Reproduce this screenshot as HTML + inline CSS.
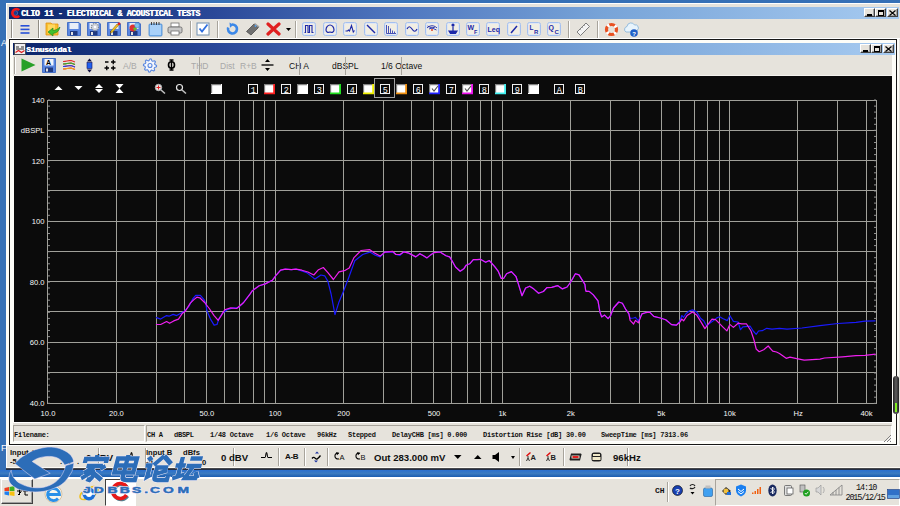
<!DOCTYPE html><html><head><meta charset="utf-8"><style>
*{margin:0;padding:0;box-sizing:border-box}
html,body{width:900px;height:506px;overflow:hidden}
body{position:relative;background:#3670b6;font-family:"Liberation Sans",sans-serif;}
.a{position:absolute}
.tb{background:linear-gradient(to right,#0a246a 0%,#2a4898 23%,#5078c0 44.5%,#78a4d8 67%,#a6caf0 100%)}
.face{background:#e6e3dc}
.wb{position:absolute;width:11px;height:9px;background:#e6e3dc;border:1px solid;border-color:#fff #404040 #404040 #fff;box-shadow:inset -1px -1px #a0a0a0}
.sep{position:absolute;width:2px;border-left:1px solid #a8a49c;border-right:1px solid #fff}
.mono{font-family:"Liberation Mono",monospace}
.st{position:absolute;top:430px;font-family:"Liberation Mono",monospace;font-size:7px;letter-spacing:-0.25px;color:#101010;font-weight:bold;white-space:pre;line-height:10px}
.ib{position:absolute;top:22px;width:14px;height:14px;border:1px solid #a4c0f0;border-radius:2.5px;background:#f1eee4;box-shadow:inset 0 0 0 1px #dfe6f4}
.ttxt{position:absolute;font-size:8.5px;color:#101010;line-height:10px;white-space:pre}
.nb{position:absolute;top:84px;width:10px;height:10px;border:1px solid #fff;color:#fff;font:bold 8px/8px "Liberation Mono",monospace;text-align:center}
.cb{position:absolute;top:84px;width:11px;height:10px;background:#fff;border-top:2px solid #808080;border-left:1px solid #a0a0a0}
</style></head><body>
<div class="a face" style="left:6px;top:3px;width:894px;height:466px;border-left:1px solid #fff;border-top:1px solid #fff"></div>
<div class="a" style="left:6px;top:39px;width:3px;height:407px;background:#fcfbf6"></div>
<div class="a tb" style="left:9px;top:7px;width:890px;height:12px"></div>
<svg class="a" style="left:10px;top:7px" width="11" height="12" viewBox="0 0 11 12"><circle cx="5.3" cy="6" r="2.4" fill="#1a3a8a" stroke="#6080c0" stroke-width="0.6"/><path d="M9.2 3.2A4 4 0 1 0 9.2 8.8" fill="none" stroke="#f01818" stroke-width="2.6"/></svg>
<div class="a mono" style="left:21px;top:7.7px;height:12px;font-size:8.2px;line-height:12px;font-weight:bold;color:#fff;letter-spacing:-0.33px;white-space:pre;text-shadow:0.5px 0 0 #fff">CLIO 11 - ELECTRICAL &amp; ACOUSTICAL TESTS</div>
<div class="wb" style="left:864px;top:8px"></div>
<div class="wb" style="left:875px;top:8px"></div>
<div class="wb" style="left:887px;top:8px"></div>
<div class="a" style="left:867px;top:14px;width:5px;height:2px;background:#000"></div>
<div class="a" style="left:878px;top:10px;width:6px;height:6px;border:1px solid #000;border-top-width:2px"></div>
<svg class="a" style="left:889px;top:10px" width="7" height="6"><path d="M0.5 0.5L6.5 5.5M6.5 0.5L0.5 5.5" stroke="#000" stroke-width="1.2"/></svg>
<div class="a" style="left:9px;top:38px;width:891px;height:1px;background:#fff"></div>
<div class="a" style="left:11px;top:20px;width:2px;height:18px;border-left:1px solid #908c84;border-right:1px solid #fff"></div>
<svg class="a" style="left:20px;top:24px" width="10" height="11" viewBox="0 0 10 11"><rect x="0.5" y="1" width="9" height="1.6" fill="#2850d8"/><rect x="0.5" y="4.6" width="9" height="1.6" fill="#2850d8"/><rect x="0.5" y="8.2" width="9" height="1.6" fill="#2850d8"/></svg>
<div class="sep" style="left:190px;top:21px;height:17px"></div>
<div class="sep" style="left:217px;top:21px;height:17px"></div>
<div class="sep" style="left:295px;top:21px;height:17px"></div>
<div class="sep" style="left:568px;top:21px;height:17px"></div>
<div class="sep" style="left:597px;top:21px;height:17px"></div>
<div class="a" style="left:38px;top:20px;width:2px;height:18px;border-left:1px solid #908c84;border-right:1px solid #fff"></div>
<svg class="a" style="left:45px;top:21px" width="16" height="16" viewBox="0 0 16 16"><path d="M1 2h5l1 1h6v11H1z" fill="#f8c030" stroke="#e09010" stroke-width="0.8"/><path d="M3 3.5h7v9H3z" fill="#ffd860"/><path d="M15 6c-1 4-3 6-7 6.5V15L3 11l5-4v2.5c3-.3 5-1.5 7-3.5z" fill="#40c030" stroke="#208010" stroke-width="0.6"/></svg>
<svg class="a" style="left:67px;top:22px" width="14" height="14" viewBox="0 0 14 14"><path d="M0.5 0.5h11.5l1.5 1.5v11.5H0.5z" fill="#5a86e0" stroke="#3060c0" stroke-width="0.8"/><rect x="2.5" y="1" width="9" height="6" fill="#e8eef8"/><rect x="3" y="9" width="7.5" height="4.5" fill="#203a80"/><rect x="4" y="10" width="2" height="3" fill="#e0e0e0"/></svg>
<svg class="a" style="left:87px;top:22px" width="14" height="14" viewBox="0 0 14 14"><path d="M0.5 0.5h11.5l1.5 1.5v11.5H0.5z" fill="#5a86e0" stroke="#3060c0" stroke-width="0.8"/><rect x="2.5" y="1" width="9" height="6" fill="#e8eef8"/><rect x="3" y="9" width="7.5" height="4.5" fill="#203a80"/><rect x="4" y="10" width="2" height="3" fill="#e0e0e0"/><circle cx="8" cy="5" r="3.6" fill="#d0d4dc" stroke="#808890" stroke-width="1.2" stroke-dasharray="1.4 1"/><circle cx="8" cy="5" r="1.3" fill="#fff"/></svg>
<svg class="a" style="left:107px;top:22px" width="14" height="14" viewBox="0 0 14 14"><path d="M0.5 0.5h11.5l1.5 1.5v11.5H0.5z" fill="#5a86e0" stroke="#3060c0" stroke-width="0.8"/><rect x="2.5" y="1" width="9" height="6" fill="#e8eef8"/><rect x="3" y="9" width="7.5" height="4.5" fill="#203a80"/><rect x="4" y="10" width="2" height="3" fill="#e0e0e0"/><path d="M4 9l6-7 1.5 1.3-6 7-2 .8z" fill="#f0c020" stroke="#806000" stroke-width="0.5"/><circle cx="12" cy="1.8" r="1.4" fill="#e02020"/></svg>
<svg class="a" style="left:127px;top:22px" width="14" height="14" viewBox="0 0 14 14"><path d="M0.5 0.5h11.5l1.5 1.5v11.5H0.5z" fill="#5a86e0" stroke="#3060c0" stroke-width="0.8"/><rect x="2.5" y="1" width="9" height="6" fill="#e8eef8"/><rect x="3" y="9" width="7.5" height="4.5" fill="#203a80"/><rect x="4" y="10" width="2" height="3" fill="#e0e0e0"/><circle cx="6" cy="6" r="3.5" fill="#e03030"/><path d="M6 6l3.5-1a3.5 3.5 0 0 1-2 4z" fill="#60c030"/><circle cx="10" cy="3.5" r="2.4" fill="#80c0f0" stroke="#4080c0" stroke-width="0.5"/></svg>
<svg class="a" style="left:148px;top:21px" width="15" height="16" viewBox="0 0 15 16"><rect x="1" y="3" width="13" height="12" rx="1" fill="#80b8f0" stroke="#4888d0" stroke-width="0.8"/><rect x="2" y="4" width="11" height="10" fill="#a8d0f8"/><g fill="#404040"><rect x="3" y="1" width="1" height="3"/><rect x="5.5" y="1" width="1" height="3"/><rect x="8" y="1" width="1" height="3"/><rect x="10.5" y="1" width="1" height="3"/></g></svg>
<svg class="a" style="left:167px;top:22px" width="16" height="14" viewBox="0 0 16 14"><rect x="4" y="1" width="8" height="4" fill="#fff" stroke="#707070" stroke-width="0.8"/><rect x="1" y="5" width="14" height="6" rx="1.5" fill="#c8c8c8" stroke="#606060" stroke-width="0.8"/><rect x="4" y="9" width="8" height="4" fill="#fff" stroke="#707070" stroke-width="0.8"/></svg>
<svg class="a" style="left:196px;top:22px" width="14" height="14" viewBox="0 0 14 14"><rect x="1" y="1" width="12" height="12" fill="#fff" stroke="#7090b0" stroke-width="1"/><path d="M3.5 6.5l2.5 3 5.5-7" fill="none" stroke="#3070e0" stroke-width="1.8"/></svg>
<svg class="a" style="left:225px;top:22px" width="14" height="14" viewBox="0 0 14 14"><path d="M3.2 5.5A4.5 4.5 0 1 0 7 2.5" fill="none" stroke="#3c88e8" stroke-width="2.6"/><path d="M4.5 0.5l4 2.2-3.5 3z" fill="#3c88e8"/></svg>
<svg class="a" style="left:245px;top:22px" width="15" height="14" viewBox="0 0 15 14"><path d="M1.5 9.5L9 2l4.5 3.5-7.5 7.5z" fill="#707070" stroke="#404040" stroke-width="0.7"/><path d="M9 2l4.5 3.5 1-1L10 1z" fill="#a0a0a0"/><circle cx="10.5" cy="4" r="0.9" fill="#50a0f0"/></svg>
<svg class="a" style="left:266px;top:22px" width="15" height="14" viewBox="0 0 15 14"><path d="M2 2L13 12M13 2L2 12" stroke="#e02020" stroke-width="3.2" stroke-linecap="round"/></svg>
<svg class="a" style="left:286px;top:28px" width="5" height="3" viewBox="0 0 5 3"><path d="M0 0h5L2.5 3z" fill="#000"/></svg>
<div class="ib" style="left:302px"></div>
<div class="ib" style="left:323px"></div>
<div class="ib" style="left:343px"></div>
<div class="ib" style="left:364px"></div>
<div class="ib" style="left:384px"></div>
<div class="ib" style="left:405px"></div>
<div class="ib" style="left:425px"></div>
<div class="ib" style="left:446px"></div>
<div class="ib" style="left:466px"></div>
<div class="ib" style="left:486px"></div>
<div class="ib" style="left:507px"></div>
<div class="ib" style="left:527px"></div>
<div class="ib" style="left:547px"></div>
<svg class="a" style="left:302px;top:22px" width="14" height="14" viewBox="0 0 14 14"><path d="M2.5 10.5h1V3.5h2.5v7h1.5V3.5h2.5v7h1.5" fill="none" stroke="#1c28a8" stroke-width="1.1"/></svg>
<svg class="a" style="left:323px;top:22px" width="14" height="14" viewBox="0 0 14 14"><path d="M3 8c0-3 2-5 4-5s4 2 4 5c0 2-2 3-4 2-2 1-4 0-4-2z" fill="none" stroke="#1c28a8" stroke-width="1.2"/></svg>
<svg class="a" style="left:343px;top:22px" width="14" height="14" viewBox="0 0 14 14"><path d="M2.5 9h2l1-1 1 1 2-5.5 1.8 6.5 1.2-1.5" fill="none" stroke="#1c28a8" stroke-width="1.1"/></svg>
<svg class="a" style="left:364px;top:22px" width="14" height="14" viewBox="0 0 14 14"><path d="M3 3l8 8" stroke="#1c28a8" stroke-width="1.4"/></svg>
<svg class="a" style="left:384px;top:22px" width="14" height="14" viewBox="0 0 14 14"><path d="M2.5 3v8.5h9.5M4.5 11V4M6.5 11V6.5M8.5 11V8.5M10.5 11V9.5" fill="none" stroke="#1c28a8" stroke-width="0.8"/></svg>
<svg class="a" style="left:405px;top:22px" width="14" height="14" viewBox="0 0 14 14"><path d="M2 7c1.5-3 3-3 5 0s3.5 3 5 0" fill="none" stroke="#1c28a8" stroke-width="1.2"/></svg>
<svg class="a" style="left:425px;top:22px" width="14" height="14" viewBox="0 0 14 14"><path d="M2 6c3-3 7-3 10 0M2.5 4l9 4M4 7l6-2" fill="none" stroke="#1c28a8" stroke-width="0.9"/><circle cx="7" cy="8" r="1" fill="#e04020"/></svg>
<svg class="a" style="left:446px;top:22px" width="14" height="14" viewBox="0 0 14 14"><circle cx="7" cy="3" r="1.6" fill="#1c28a8"/><path d="M7 4.5v4M3 9h8l-1.5 2.5h-5z" fill="#1c28a8" stroke="#1c28a8" stroke-width="1.2"/></svg>
<svg class="a" style="left:466px;top:22px" width="14" height="14" viewBox="0 0 14 14"><text x="1.5" y="8" font-family="Liberation Sans" font-weight="bold" font-size="7" fill="#1c28a8">W</text><text x="8" y="11.5" font-family="Liberation Sans" font-weight="bold" font-size="5.5" fill="#1c28a8">F</text></svg>
<svg class="a" style="left:486px;top:22px" width="14" height="14" viewBox="0 0 14 14"><text x="1.5" y="9.5" font-family="Liberation Sans" font-weight="bold" font-size="7" fill="#1c28a8">Leq</text></svg>
<svg class="a" style="left:507px;top:22px" width="14" height="14" viewBox="0 0 14 14"><path d="M4 11l6-7" stroke="#1c28a8" stroke-width="1.5"/></svg>
<svg class="a" style="left:527px;top:22px" width="14" height="14" viewBox="0 0 14 14"><text x="2.5" y="7.5" font-family="Liberation Sans" font-weight="bold" font-size="6.5" fill="#1c28a8">L</text><text x="7" y="11.5" font-family="Liberation Sans" font-weight="bold" font-size="6" fill="#1c28a8">R</text></svg>
<svg class="a" style="left:547px;top:22px" width="14" height="14" viewBox="0 0 14 14"><text x="1.5" y="8" font-family="Liberation Sans" font-weight="bold" font-size="7" fill="#1c28a8">Q</text><text x="7.5" y="11.5" font-family="Liberation Sans" font-weight="bold" font-size="6" fill="#1c28a8">C</text></svg>
<svg class="a" style="left:576px;top:22px" width="15" height="14" viewBox="0 0 15 14"><path d="M1 10L10 1l3.5 3.5-9 9z" fill="#f4f4f4" stroke="#707070" stroke-width="0.9"/><path d="M4 7l1.2 1.2M6 5l1.2 1.2M8 3l1.2 1.2" stroke="#808080" stroke-width="0.6"/></svg>
<svg class="a" style="left:604px;top:22px" width="15" height="15" viewBox="0 0 15 15"><circle cx="7.5" cy="7.5" r="5" fill="none" stroke="#e85020" stroke-width="3.2"/><circle cx="7.5" cy="7.5" r="5" fill="none" stroke="#fff" stroke-width="3.4" stroke-dasharray="2.2 5.65" stroke-dashoffset="-2.8"/></svg>
<svg class="a" style="left:623px;top:21px" width="17" height="17" viewBox="0 0 17 17"><path d="M3 11a3 3 0 0 1 1-5.5A4 4 0 0 1 11.5 4a3 3 0 0 1 3 5 2 2 0 0 1-1 2z" fill="#e8f4fc" stroke="#80b0d8" stroke-width="0.8"/><circle cx="11" cy="12" r="3.8" fill="#2060c8"/><text x="9.2" y="14.5" font-family="Liberation Sans" font-weight="bold" font-size="6" fill="#fff">?</text></svg>
<div class="a" style="left:9px;top:39px;width:888px;height:406px;background:#fdfdf8;border:1px solid #181818"></div>
<div class="a" style="left:897px;top:39px;width:2px;height:407px;background:#fcfbf6"></div>
<div class="a face" style="left:13px;top:55px;width:879px;height:21px"></div>
<div class="a face" style="left:13px;top:423px;width:879px;height:19px"></div>
<div class="a tb" style="left:13px;top:43px;width:882px;height:12px"></div>
<svg class="a" style="left:14px;top:43px" width="12" height="12" viewBox="0 0 12 12"><rect x="0.5" y="0.5" width="11" height="11" fill="#f0f0f0" stroke="#404040" stroke-width="0.8"/><path d="M2 4h3M7 4h3M2 6h8" stroke="#303030" stroke-width="1"/><path d="M1.5 9.5l3-2 3 2 3-2" fill="none" stroke="#e02020" stroke-width="1.2"/></svg>
<div class="a mono" style="left:26px;top:44px;height:12px;font-size:8px;line-height:12px;font-weight:bold;color:#fff;letter-spacing:-0.3px;white-space:pre;text-shadow:0.5px 0 0 #fff">Sinusoidal</div>
<div class="wb" style="left:860px;top:44px"></div>
<div class="wb" style="left:871px;top:44px"></div>
<div class="wb" style="left:883px;top:44px"></div>
<div class="a" style="left:863px;top:50px;width:5px;height:2px;background:#000"></div>
<div class="a" style="left:874px;top:46px;width:6px;height:6px;border:1px solid #000;border-top-width:2px"></div>
<svg class="a" style="left:885px;top:46px" width="7" height="6" viewBox="0 0 7 6"><path d="M0.5 0.5L6.5 5.5M6.5 0.5L0.5 5.5" stroke="#000" stroke-width="1.2"/></svg>
<div class="a" style="left:14px;top:57px;width:2px;height:17px;border-left:1px solid #a8a49c;border-right:1px solid #fff"></div>
<svg class="a" style="left:21px;top:58px" width="15" height="14" viewBox="0 0 15 14"><path d="M0.5 0.5L14.5 7L0.5 13.5z" fill="#28a028"/></svg>
<svg class="a" style="left:42px;top:58px" width="14" height="15" viewBox="0 0 14 15"><path d="M0.5 0.5h13v14H0.5z" fill="#5a86e0" stroke="#3060c0" stroke-width="0.8"/><rect x="2.5" y="1" width="9" height="6.5" fill="#f0f4fc"/><text x="4" y="7" font-family="Liberation Sans" font-weight="bold" font-size="7" fill="#000">A</text><rect x="3" y="9.5" width="8" height="4.5" fill="#203a80"/><rect x="4" y="10.5" width="2" height="3" fill="#e0e0e0"/></svg>
<svg class="a" style="left:63px;top:60px" width="13" height="11" viewBox="0 0 13 11"><path d="M0 1.5c4 0 4-1 8-1l4 1.5M0 4c4 0 4-1 8-1l4 1.5M0 6.5c4 0 4-1 8-1l4 1.5M0 9c4 0 4-1 8-1l4 1.5" fill="none" stroke-width="1.2" stroke="#e03030"/><path d="M0 4c4 0 4-1 8-1l4 1.5" fill="none" stroke="#30b030" stroke-width="1.2"/><path d="M0 6.5c4 0 4-1 8-1l4 1.5" fill="none" stroke="#3040e0" stroke-width="1.2"/><path d="M0 9c4 0 4-1 8-1l4 1.5" fill="none" stroke="#f0a020" stroke-width="1.2"/></svg>
<svg class="a" style="left:85px;top:58px" width="9" height="15" viewBox="0 0 9 15"><path d="M4.5 0.5l2.5 3h-5zM4.5 14.5l2.5-3h-5z" fill="#101040"/><rect x="2" y="4.5" width="5" height="6" fill="#2060f0" stroke="#101060" stroke-width="0.6"/></svg>
<svg class="a" style="left:104px;top:59px" width="12" height="12" viewBox="0 0 12 12"><path d="M1 3h3.5M7 3h4.5M9.25 0.75v4.5M0.5 9h4.5M2.75 6.75v4.5M7 9h4.5M9.25 6.75v4.5" stroke="#000" stroke-width="1.3"/></svg>
<div class="ttxt" style="left:123px;top:61px;color:#a8a8a8">A/B</div>
<svg class="a" style="left:142px;top:58px" width="16" height="15" viewBox="0 0 16 15"><path d="M14.60 7.50 L14.47 8.79 L12.62 9.41 L12.16 10.28 L12.67 12.17 L11.67 12.99 L9.91 12.12 L8.98 12.40 L8.00 14.10 L6.71 13.97 L6.09 12.12 L5.22 11.66 L3.33 12.17 L2.51 11.17 L3.38 9.41 L3.10 8.48 L1.40 7.50 L1.53 6.21 L3.38 5.59 L3.84 4.72 L3.33 2.83 L4.33 2.01 L6.09 2.88 L7.02 2.60 L8.00 0.90 L9.29 1.03 L9.91 2.88 L10.78 3.34 L12.67 2.83 L13.49 3.83 L12.62 5.59 L12.90 6.52Z" fill="#f4f6fc" stroke="#5a88e0" stroke-width="1.1" stroke-linejoin="round"/><circle cx="8" cy="7.5" r="2" fill="none" stroke="#5a88e0" stroke-width="1.1"/></svg>
<svg class="a" style="left:167px;top:59px" width="9" height="12" viewBox="0 0 9 12"><ellipse cx="4.5" cy="6" rx="3" ry="3.2" fill="none" stroke="#000" stroke-width="1.6"/><path d="M4.5 0.5v11M2.5 1h4M2.5 11h4" stroke="#000" stroke-width="1.4"/></svg>
<div class="ttxt" style="left:191px;top:61px;color:#a8a8a8">THD</div>
<div class="a" style="left:199px;top:57px;width:1px;height:18px;background:#a8a49c"></div>
<div class="ttxt" style="left:220px;top:61px;color:#a8a8a8">Dist</div>
<div class="ttxt" style="left:240px;top:61px;color:#a8a8a8">R+B</div>
<svg class="a" style="left:261px;top:58px" width="13" height="14" viewBox="0 0 13 14"><path d="M0.5 7h12" stroke="#000" stroke-width="1.3"/><path d="M6.5 1l2.5 3h-5zM6.5 13l2.5-3h-5z" fill="#000"/></svg>
<div class="ttxt" style="left:289px;top:61px">CH A</div>
<div class="ttxt" style="left:332px;top:61px">dBSPL</div>
<div class="ttxt" style="left:381px;top:61px">1/6 Octave</div>
<div class="a" style="left:299px;top:57px;width:1px;height:18px;background:#a8a49c"></div>
<div class="a" style="left:345px;top:57px;width:1px;height:18px;background:#a8a49c"></div>
<div class="a" style="left:401px;top:57px;width:1px;height:18px;background:#a8a49c"></div>
<div class="a" style="left:14px;top:75px;width:878px;height:1px;background:#f4f2ee"></div>
<svg class="a" style="left:14px;top:76px" width="878" height="346" viewBox="14 76 878 346"><rect x="14" y="76" width="878" height="346" fill="#0b0b0b"/><path d="M47.5 130.5H876.5" stroke="#a0a09a" stroke-width="1"/><path d="M47.5 160.5H876.5" stroke="#a0a09a" stroke-width="1"/><path d="M47.5 190.5H876.5" stroke="#a0a09a" stroke-width="1"/><path d="M47.5 221.5H876.5" stroke="#a0a09a" stroke-width="1"/><path d="M47.5 251.5H876.5" stroke="#a0a09a" stroke-width="1"/><path d="M47.5 281.5H876.5" stroke="#a0a09a" stroke-width="1"/><path d="M47.5 311.5H876.5" stroke="#a0a09a" stroke-width="1"/><path d="M47.5 342.5H876.5" stroke="#a0a09a" stroke-width="1"/><path d="M47.5 372.5H876.5" stroke="#a0a09a" stroke-width="1"/><path d="M116.5 100.5V403.5" stroke="#a0a09a" stroke-width="1"/><path d="M156.5 100.5V403.5" stroke="#a0a09a" stroke-width="1"/><path d="M184.5 100.5V403.5" stroke="#a0a09a" stroke-width="1"/><path d="M206.5 100.5V403.5" stroke="#a0a09a" stroke-width="1"/><path d="M224.5 100.5V403.5" stroke="#a0a09a" stroke-width="1"/><path d="M239.5 100.5V403.5" stroke="#a0a09a" stroke-width="1"/><path d="M253.5 100.5V403.5" stroke="#a0a09a" stroke-width="1"/><path d="M264.5 100.5V403.5" stroke="#a0a09a" stroke-width="1"/><path d="M275.5 100.5V403.5" stroke="#a0a09a" stroke-width="1"/><path d="M343.5 100.5V403.5" stroke="#a0a09a" stroke-width="1"/><path d="M383.5 100.5V403.5" stroke="#a0a09a" stroke-width="1"/><path d="M411.5 100.5V403.5" stroke="#a0a09a" stroke-width="1"/><path d="M433.5 100.5V403.5" stroke="#a0a09a" stroke-width="1"/><path d="M451.5 100.5V403.5" stroke="#a0a09a" stroke-width="1"/><path d="M467.5 100.5V403.5" stroke="#a0a09a" stroke-width="1"/><path d="M480.5 100.5V403.5" stroke="#a0a09a" stroke-width="1"/><path d="M491.5 100.5V403.5" stroke="#a0a09a" stroke-width="1"/><path d="M502.5 100.5V403.5" stroke="#a0a09a" stroke-width="1"/><path d="M570.5 100.5V403.5" stroke="#a0a09a" stroke-width="1"/><path d="M610.5 100.5V403.5" stroke="#a0a09a" stroke-width="1"/><path d="M639.5 100.5V403.5" stroke="#a0a09a" stroke-width="1"/><path d="M661.5 100.5V403.5" stroke="#a0a09a" stroke-width="1"/><path d="M679.5 100.5V403.5" stroke="#a0a09a" stroke-width="1"/><path d="M694.5 100.5V403.5" stroke="#a0a09a" stroke-width="1"/><path d="M707.5 100.5V403.5" stroke="#a0a09a" stroke-width="1"/><path d="M719.5 100.5V403.5" stroke="#a0a09a" stroke-width="1"/><path d="M729.5 100.5V403.5" stroke="#a0a09a" stroke-width="1"/><path d="M797.5 100.5V403.5" stroke="#a0a09a" stroke-width="1"/><path d="M837.5 100.5V403.5" stroke="#a0a09a" stroke-width="1"/><path d="M866.5 100.5V403.5" stroke="#a0a09a" stroke-width="1"/><rect x="47.5" y="100.5" width="829.0" height="303.0" fill="none" stroke="#a0a09a" stroke-width="1"/><path d="M48 100.0h2" stroke="#909090" stroke-width="1"/><path d="M874 100.0h2" stroke="#909090" stroke-width="1"/><path d="M48 106.1h2" stroke="#909090" stroke-width="1"/><path d="M874 106.1h2" stroke="#909090" stroke-width="1"/><path d="M48 112.1h2" stroke="#909090" stroke-width="1"/><path d="M874 112.1h2" stroke="#909090" stroke-width="1"/><path d="M48 118.2h2" stroke="#909090" stroke-width="1"/><path d="M874 118.2h2" stroke="#909090" stroke-width="1"/><path d="M48 124.3h2" stroke="#909090" stroke-width="1"/><path d="M874 124.3h2" stroke="#909090" stroke-width="1"/><path d="M48 130.3h2" stroke="#909090" stroke-width="1"/><path d="M874 130.3h2" stroke="#909090" stroke-width="1"/><path d="M48 136.4h2" stroke="#909090" stroke-width="1"/><path d="M874 136.4h2" stroke="#909090" stroke-width="1"/><path d="M48 142.5h2" stroke="#909090" stroke-width="1"/><path d="M874 142.5h2" stroke="#909090" stroke-width="1"/><path d="M48 148.5h2" stroke="#909090" stroke-width="1"/><path d="M874 148.5h2" stroke="#909090" stroke-width="1"/><path d="M48 154.6h2" stroke="#909090" stroke-width="1"/><path d="M874 154.6h2" stroke="#909090" stroke-width="1"/><path d="M48 160.7h2" stroke="#909090" stroke-width="1"/><path d="M874 160.7h2" stroke="#909090" stroke-width="1"/><path d="M48 166.7h2" stroke="#909090" stroke-width="1"/><path d="M874 166.7h2" stroke="#909090" stroke-width="1"/><path d="M48 172.8h2" stroke="#909090" stroke-width="1"/><path d="M874 172.8h2" stroke="#909090" stroke-width="1"/><path d="M48 178.9h2" stroke="#909090" stroke-width="1"/><path d="M874 178.9h2" stroke="#909090" stroke-width="1"/><path d="M48 184.9h2" stroke="#909090" stroke-width="1"/><path d="M874 184.9h2" stroke="#909090" stroke-width="1"/><path d="M48 191.0h2" stroke="#909090" stroke-width="1"/><path d="M874 191.0h2" stroke="#909090" stroke-width="1"/><path d="M48 197.1h2" stroke="#909090" stroke-width="1"/><path d="M874 197.1h2" stroke="#909090" stroke-width="1"/><path d="M48 203.1h2" stroke="#909090" stroke-width="1"/><path d="M874 203.1h2" stroke="#909090" stroke-width="1"/><path d="M48 209.2h2" stroke="#909090" stroke-width="1"/><path d="M874 209.2h2" stroke="#909090" stroke-width="1"/><path d="M48 215.3h2" stroke="#909090" stroke-width="1"/><path d="M874 215.3h2" stroke="#909090" stroke-width="1"/><path d="M48 221.3h2" stroke="#909090" stroke-width="1"/><path d="M874 221.3h2" stroke="#909090" stroke-width="1"/><path d="M48 227.4h2" stroke="#909090" stroke-width="1"/><path d="M874 227.4h2" stroke="#909090" stroke-width="1"/><path d="M48 233.5h2" stroke="#909090" stroke-width="1"/><path d="M874 233.5h2" stroke="#909090" stroke-width="1"/><path d="M48 239.5h2" stroke="#909090" stroke-width="1"/><path d="M874 239.5h2" stroke="#909090" stroke-width="1"/><path d="M48 245.6h2" stroke="#909090" stroke-width="1"/><path d="M874 245.6h2" stroke="#909090" stroke-width="1"/><path d="M48 251.7h2" stroke="#909090" stroke-width="1"/><path d="M874 251.7h2" stroke="#909090" stroke-width="1"/><path d="M48 257.7h2" stroke="#909090" stroke-width="1"/><path d="M874 257.7h2" stroke="#909090" stroke-width="1"/><path d="M48 263.8h2" stroke="#909090" stroke-width="1"/><path d="M874 263.8h2" stroke="#909090" stroke-width="1"/><path d="M48 269.8h2" stroke="#909090" stroke-width="1"/><path d="M874 269.8h2" stroke="#909090" stroke-width="1"/><path d="M48 275.9h2" stroke="#909090" stroke-width="1"/><path d="M874 275.9h2" stroke="#909090" stroke-width="1"/><path d="M48 282.0h2" stroke="#909090" stroke-width="1"/><path d="M874 282.0h2" stroke="#909090" stroke-width="1"/><path d="M48 288.0h2" stroke="#909090" stroke-width="1"/><path d="M874 288.0h2" stroke="#909090" stroke-width="1"/><path d="M48 294.1h2" stroke="#909090" stroke-width="1"/><path d="M874 294.1h2" stroke="#909090" stroke-width="1"/><path d="M48 300.2h2" stroke="#909090" stroke-width="1"/><path d="M874 300.2h2" stroke="#909090" stroke-width="1"/><path d="M48 306.2h2" stroke="#909090" stroke-width="1"/><path d="M874 306.2h2" stroke="#909090" stroke-width="1"/><path d="M48 312.3h2" stroke="#909090" stroke-width="1"/><path d="M874 312.3h2" stroke="#909090" stroke-width="1"/><path d="M48 318.4h2" stroke="#909090" stroke-width="1"/><path d="M874 318.4h2" stroke="#909090" stroke-width="1"/><path d="M48 324.4h2" stroke="#909090" stroke-width="1"/><path d="M874 324.4h2" stroke="#909090" stroke-width="1"/><path d="M48 330.5h2" stroke="#909090" stroke-width="1"/><path d="M874 330.5h2" stroke="#909090" stroke-width="1"/><path d="M48 336.6h2" stroke="#909090" stroke-width="1"/><path d="M874 336.6h2" stroke="#909090" stroke-width="1"/><path d="M48 342.6h2" stroke="#909090" stroke-width="1"/><path d="M874 342.6h2" stroke="#909090" stroke-width="1"/><path d="M48 348.7h2" stroke="#909090" stroke-width="1"/><path d="M874 348.7h2" stroke="#909090" stroke-width="1"/><path d="M48 354.8h2" stroke="#909090" stroke-width="1"/><path d="M874 354.8h2" stroke="#909090" stroke-width="1"/><path d="M48 360.8h2" stroke="#909090" stroke-width="1"/><path d="M874 360.8h2" stroke="#909090" stroke-width="1"/><path d="M48 366.9h2" stroke="#909090" stroke-width="1"/><path d="M874 366.9h2" stroke="#909090" stroke-width="1"/><path d="M48 373.0h2" stroke="#909090" stroke-width="1"/><path d="M874 373.0h2" stroke="#909090" stroke-width="1"/><path d="M48 379.0h2" stroke="#909090" stroke-width="1"/><path d="M874 379.0h2" stroke="#909090" stroke-width="1"/><path d="M48 385.1h2" stroke="#909090" stroke-width="1"/><path d="M874 385.1h2" stroke="#909090" stroke-width="1"/><path d="M48 391.2h2" stroke="#909090" stroke-width="1"/><path d="M874 391.2h2" stroke="#909090" stroke-width="1"/><path d="M48 397.2h2" stroke="#909090" stroke-width="1"/><path d="M874 397.2h2" stroke="#909090" stroke-width="1"/><path d="M48 403.3h2" stroke="#909090" stroke-width="1"/><path d="M874 403.3h2" stroke="#909090" stroke-width="1"/><text x="44.5" y="102.8" text-anchor="end" font-family="Liberation Sans" font-size="7.6" fill="#f8f8f8">140</text><text x="44.5" y="133.1" text-anchor="end" font-family="Liberation Sans" font-size="7.6" fill="#f8f8f8">dBSPL</text><text x="44.5" y="163.5" text-anchor="end" font-family="Liberation Sans" font-size="7.6" fill="#f8f8f8">120</text><text x="44.5" y="224.1" text-anchor="end" font-family="Liberation Sans" font-size="7.6" fill="#f8f8f8">100</text><text x="44.5" y="284.8" text-anchor="end" font-family="Liberation Sans" font-size="7.6" fill="#f8f8f8">80.0</text><text x="44.5" y="345.4" text-anchor="end" font-family="Liberation Sans" font-size="7.6" fill="#f8f8f8">60.0</text><text x="44.5" y="406.1" text-anchor="end" font-family="Liberation Sans" font-size="7.6" fill="#f8f8f8">40.0</text><text x="48.0" y="415.5" text-anchor="middle" font-family="Liberation Sans" font-size="7.6" fill="#f8f8f8">10.0</text><text x="116.4" y="415.5" text-anchor="middle" font-family="Liberation Sans" font-size="7.6" fill="#f8f8f8">20.0</text><text x="206.8" y="415.5" text-anchor="middle" font-family="Liberation Sans" font-size="7.6" fill="#f8f8f8">50.0</text><text x="275.2" y="415.5" text-anchor="middle" font-family="Liberation Sans" font-size="7.6" fill="#f8f8f8">100</text><text x="343.6" y="415.5" text-anchor="middle" font-family="Liberation Sans" font-size="7.6" fill="#f8f8f8">200</text><text x="434.0" y="415.5" text-anchor="middle" font-family="Liberation Sans" font-size="7.6" fill="#f8f8f8">500</text><text x="502.4" y="415.5" text-anchor="middle" font-family="Liberation Sans" font-size="7.6" fill="#f8f8f8">1k</text><text x="570.8" y="415.5" text-anchor="middle" font-family="Liberation Sans" font-size="7.6" fill="#f8f8f8">2k</text><text x="661.3" y="415.5" text-anchor="middle" font-family="Liberation Sans" font-size="7.6" fill="#f8f8f8">5k</text><text x="729.7" y="415.5" text-anchor="middle" font-family="Liberation Sans" font-size="7.6" fill="#f8f8f8">10k</text><text x="798.1" y="415.5" text-anchor="middle" font-family="Liberation Sans" font-size="7.6" fill="#f8f8f8">Hz</text><text x="866.5" y="415.5" text-anchor="middle" font-family="Liberation Sans" font-size="7.6" fill="#f8f8f8">40k</text><path d="M155.9 317.4 L160.7 319.1 L166.6 315.6 L169.0 316.2 L173.1 314.4 L176.7 315.6 L180.8 313.2 L184.4 311.4 L189.1 306.1 L192.7 299.0 L195.7 295.4 L200.4 295.4 L204.0 299.6 L205.8 303.7 L206.9 310.8 L210.5 319.1 L214.1 325.1 L217.0 324.5 L218.8 319.1 L222.4 313.2 L227.1 309.7 L233.0 307.9 L237.8 307.9 L242.5 303.7 L250.0 294.2 L252.1 291.0 L259.2 285.7 L265.2 283.9 L272.3 280.3 L275.8 275.6 L280.6 270.2 L285.3 269.1 L291.3 269.7 L296.0 269.1 L299.6 270.2 L306.7 272.6 L315.0 279.1 L320.9 275.0 L324.7 275.8 L327.9 281.4 L331.1 294.0 L335.0 314.6 L339.0 301.9 L343.7 290.8 L348.5 278.2 L354.8 260.8 L362.7 254.5 L369.8 252.1 L375.3 255.3 L380.1 256.9 L384.8 252.1 L392.7 252.1 L395.9 254.5 L400.0 255.3 L403.9 251.8 L408.0 252.8 L411.6 254.6 L415.8 256.9 L419.9 253.7 L423.5 255.8 L427.0 257.9 L430.6 254.9 L434.1 252.6 L440.1 252.0 L442.4 253.4 L446.0 255.8 L449.6 256.9 L451.9 260.5 L455.5 267.0 L460.2 271.2 L463.8 268.8 L466.2 265.2 L469.7 263.8 L473.3 259.7 L476.9 259.7 L480.4 259.3 L485.7 262.3 L489.3 260.5 L494.7 266.6 L498.3 271.4 L501.3 278.5 L503.6 278.5 L506.6 273.7 L511.4 271.6 L516.1 276.7 L518.5 284.4 L522.0 295.7 L525.6 288.0 L529.7 286.2 L533.9 289.1 L538.6 293.3 L543.4 291.5 L546.9 287.7 L551.7 287.4 L557.6 285.6 L562.4 288.9 L567.1 287.0 L570.7 282.0 L575.4 273.7 L579.0 274.9 L584.9 284.4 L585.6 290.0 L586.2 291.4 L589.2 291.4 L593.3 294.9 L598.0 300.8 L599.8 311.5 L601.6 316.9 L604.6 315.1 L608.1 318.6 L610.5 315.7 L613.5 308.0 L618.8 302.0 L622.4 303.2 L625.9 309.7 L628.9 313.9 L630.1 318.4 L633.6 318.0 L635.4 317.4 L638.4 320.8 L641.9 313.9 L645.5 312.7 L649.6 312.1 L653.8 316.3 L660.3 318.0 L665.7 319.8 L671.6 324.6 L676.3 325.2 L679.9 321.2 L681.8 315.5 L683.6 317.3 L685.9 313.7 L689.5 310.8 L692.5 309.9 L696.6 311.9 L700.8 318.5 L703.7 320.8 L706.7 326.2 L709.7 323.2 L713.2 320.8 L716.8 317.9 L719.7 316.7 L722.7 318.5 L727.4 320.6 L729.8 315.5 L733.4 321.4 L738.1 322.0 L740.5 329.7 L742.9 326.8 L750.2 326.2 L753.2 331.0 L756.2 334.3 L758.5 331.0 L762.2 330.7 L766.7 328.3 L772.0 329.2 L779.5 328.3 L787.0 329.2 L802.0 328.0 L820.0 325.7 L838.0 323.5 L856.0 322.3 L865.0 321.2 L875.5 320.8" fill="none" stroke="#1a1aff" stroke-width="1.2" stroke-linejoin="round"/><path d="M155.9 324.5 L160.7 324.5 L166.6 321.5 L169.6 323.3 L173.7 320.9 L178.5 319.1 L182.0 313.8 L185.6 310.8 L190.3 303.1 L193.9 299.6 L196.9 297.2 L199.8 297.8 L204.6 302.5 L209.3 308.5 L214.1 315.6 L218.2 320.3 L221.2 315.6 L224.7 309.7 L230.7 307.9 L236.6 308.5 L243.7 302.5 L250.0 294.2 L252.1 291.0 L259.2 285.7 L265.2 283.9 L272.3 280.3 L275.8 275.6 L280.6 270.2 L285.3 269.1 L291.3 269.7 L296.0 269.1 L301.9 270.2 L307.9 272.0 L313.8 275.0 L318.5 269.7 L323.3 267.5 L327.9 272.7 L333.4 279.5 L339.0 271.9 L345.3 270.3 L349.2 267.9 L354.0 257.6 L361.1 250.5 L369.8 249.7 L374.5 252.9 L380.1 256.1 L384.8 252.1 L392.7 251.3 L395.9 254.5 L400.0 254.5 L403.9 251.8 L408.0 252.8 L411.6 254.6 L415.8 256.9 L419.9 253.7 L423.5 255.8 L427.0 257.9 L430.6 254.9 L434.1 252.6 L440.1 252.0 L442.4 253.4 L446.0 255.8 L449.6 256.9 L451.9 260.5 L455.5 267.0 L460.2 271.2 L463.8 268.8 L466.2 265.2 L469.7 263.8 L473.3 259.7 L476.9 259.7 L480.4 259.3 L485.7 262.3 L489.3 260.5 L494.7 266.6 L498.3 271.4 L501.3 278.5 L503.6 278.5 L506.6 273.7 L511.4 271.6 L516.1 276.7 L518.5 284.4 L522.0 295.7 L525.6 288.0 L529.7 286.2 L533.9 289.1 L538.6 293.3 L543.4 291.5 L546.9 287.7 L551.7 287.4 L557.6 285.6 L562.4 288.9 L567.1 287.0 L570.7 282.0 L575.4 273.7 L579.0 274.9 L584.9 284.4 L585.6 290.0 L586.2 291.4 L589.2 291.4 L593.3 294.9 L598.0 300.8 L599.8 311.5 L601.6 316.9 L604.6 315.1 L608.1 318.6 L610.5 315.7 L613.5 308.0 L618.8 302.0 L622.4 303.2 L625.9 309.7 L628.9 313.9 L630.1 320.4 L633.6 324.0 L635.4 320.4 L638.4 322.8 L641.9 313.9 L645.5 312.7 L649.6 312.1 L653.8 316.3 L660.3 318.0 L665.7 319.8 L671.6 324.6 L676.3 325.2 L680.0 322.0 L681.8 319.1 L683.6 320.8 L687.1 315.5 L692.5 311.9 L696.6 314.9 L701.4 322.6 L704.9 328.6 L709.7 322.0 L712.0 319.1 L715.6 319.7 L719.1 323.2 L722.7 326.8 L726.9 330.9 L729.8 324.4 L733.4 327.4 L738.1 323.2 L741.7 323.8 L746.4 323.8 L751.0 331.0 L754.0 340.0 L756.2 349.0 L759.2 351.7 L763.7 349.7 L768.2 346.0 L772.7 351.2 L776.5 352.0 L779.5 353.5 L786.2 358.3 L790.0 357.2 L796.7 358.7 L804.2 360.2 L820.0 359.2 L824.5 358.0 L842.5 356.8 L856.0 355.7 L865.0 355.3 L875.5 354.2" fill="none" stroke="#f020f0" stroke-width="1.2" stroke-linejoin="round"/><path d="M54.5 90h8l-4-4z" fill="#fff"/><path d="M74.5 86h8l-4 4z" fill="#fff"/><path d="M95 88h8l-4-4zM95 89h8l-4 4z" fill="#fff"/><path d="M115.5 84h8l-4 4.5 4 4.5h-8l4-4.5z" fill="#fff"/><circle cx="158.5" cy="87.5" r="3.2" fill="#e8e8e8" stroke="#b0b0b0" stroke-width="1"/><path d="M156.5 87.5h4M158.5 85.5v4" stroke="#e02020" stroke-width="1"/><path d="M161 90l4 3.5" stroke="#c0c0c0" stroke-width="1.6"/><circle cx="179.5" cy="87.5" r="3" fill="none" stroke="#e8e8e8" stroke-width="1.2"/><path d="M182 90l4 3.5" stroke="#c0c0c0" stroke-width="1.6"/><rect x="211" y="84" width="11" height="10" fill="#fff"/><path d="M211.6 93V84.6H221" fill="none" stroke="#808080" stroke-width="1.1"/><rect x="248.5" y="84.5" width="9" height="9" fill="none" stroke="#f0f0f0" stroke-width="1"/><text x="253.2" y="92.5" text-anchor="middle" font-family="Liberation Mono" font-size="8.5" fill="#fff">1</text><rect x="281.5" y="84.5" width="9" height="9" fill="none" stroke="#f0f0f0" stroke-width="1"/><text x="286.2" y="92.5" text-anchor="middle" font-family="Liberation Mono" font-size="8.5" fill="#fff">2</text><rect x="314.5" y="84.5" width="9" height="9" fill="none" stroke="#f0f0f0" stroke-width="1"/><text x="319.2" y="92.5" text-anchor="middle" font-family="Liberation Mono" font-size="8.5" fill="#fff">3</text><rect x="347.5" y="84.5" width="9" height="9" fill="none" stroke="#f0f0f0" stroke-width="1"/><text x="352.2" y="92.5" text-anchor="middle" font-family="Liberation Mono" font-size="8.5" fill="#fff">4</text><rect x="380.5" y="84.5" width="9" height="9" fill="none" stroke="#f0f0f0" stroke-width="1"/><text x="385.2" y="92.5" text-anchor="middle" font-family="Liberation Mono" font-size="8.5" fill="#fff">5</text><rect x="413.5" y="84.5" width="9" height="9" fill="none" stroke="#f0f0f0" stroke-width="1"/><text x="418.2" y="92.5" text-anchor="middle" font-family="Liberation Mono" font-size="8.5" fill="#fff">6</text><rect x="446.5" y="84.5" width="9" height="9" fill="none" stroke="#f0f0f0" stroke-width="1"/><text x="451.2" y="92.5" text-anchor="middle" font-family="Liberation Mono" font-size="8.5" fill="#fff">7</text><rect x="479.5" y="84.5" width="9" height="9" fill="none" stroke="#f0f0f0" stroke-width="1"/><text x="484.2" y="92.5" text-anchor="middle" font-family="Liberation Mono" font-size="8.5" fill="#fff">8</text><rect x="512.5" y="84.5" width="9" height="9" fill="none" stroke="#f0f0f0" stroke-width="1"/><text x="517.2" y="92.5" text-anchor="middle" font-family="Liberation Mono" font-size="8.5" fill="#fff">9</text><rect x="554.5" y="84.5" width="9" height="9" fill="none" stroke="#f0f0f0" stroke-width="1"/><text x="559.2" y="92.5" text-anchor="middle" font-family="Liberation Mono" font-size="8.5" fill="#fff">A</text><rect x="575.5" y="84.5" width="9" height="9" fill="none" stroke="#f0f0f0" stroke-width="1"/><text x="580.2" y="92.5" text-anchor="middle" font-family="Liberation Mono" font-size="8.5" fill="#fff">B</text><rect x="374.5" y="78.5" width="20" height="19" fill="none" stroke="#a0a0a0" stroke-width="1"/><rect x="264" y="84" width="11" height="10" fill="#fff"/><path d="M264.6 93V84.6H274" fill="none" stroke="#808080" stroke-width="1.1"/><path d="M274.1 84V93.4H264" fill="none" stroke="#ff2020" stroke-width="1.8"/><rect x="297" y="84" width="11" height="10" fill="#fff"/><path d="M297.6 93V84.6H307" fill="none" stroke="#808080" stroke-width="1.1"/><rect x="330" y="84" width="11" height="10" fill="#fff"/><path d="M330.6 93V84.6H340" fill="none" stroke="#808080" stroke-width="1.1"/><path d="M340.1 84V93.4H330" fill="none" stroke="#20e020" stroke-width="1.8"/><rect x="363" y="84" width="11" height="10" fill="#fff"/><path d="M363.6 93V84.6H373" fill="none" stroke="#808080" stroke-width="1.1"/><path d="M373.1 84V93.4H363" fill="none" stroke="#f0f000" stroke-width="1.8"/><rect x="396" y="84" width="11" height="10" fill="#fff"/><path d="M396.6 93V84.6H406" fill="none" stroke="#808080" stroke-width="1.1"/><path d="M406.1 84V93.4H396" fill="none" stroke="#f09010" stroke-width="1.8"/><rect x="429" y="84" width="11" height="10" fill="#fff"/><path d="M429.6 93V84.6H439" fill="none" stroke="#808080" stroke-width="1.1"/><path d="M439.1 84V93.4H429" fill="none" stroke="#2020ff" stroke-width="1.8"/><path d="M432 88.5l2 2.5 4-5" fill="none" stroke="#505050" stroke-width="1.1"/><rect x="462" y="84" width="11" height="10" fill="#fff"/><path d="M462.6 93V84.6H472" fill="none" stroke="#808080" stroke-width="1.1"/><path d="M472.1 84V93.4H462" fill="none" stroke="#f010f0" stroke-width="1.8"/><path d="M465 88.5l2 2.5 4-5" fill="none" stroke="#505050" stroke-width="1.1"/><rect x="495" y="84" width="11" height="10" fill="#fff"/><path d="M495.6 93V84.6H505" fill="none" stroke="#808080" stroke-width="1.1"/><path d="M505.1 84V93.4H495" fill="none" stroke="#40f0f0" stroke-width="1.8"/><rect x="528" y="84" width="11" height="10" fill="#fff"/><path d="M528.6 93V84.6H538" fill="none" stroke="#808080" stroke-width="1.1"/></svg>
<div class="a" style="left:893px;top:376px;width:6px;height:38px;border-radius:3px;background:linear-gradient(to right,#202020,#606060,#202020)"></div>
<div class="a" style="left:895px;top:403px;width:2px;height:9px;background:#80f020"></div>
<div class="a" style="left:14px;top:422px;width:878px;height:1px;background:#fff"></div>
<div class="a" style="left:13px;top:425px;width:132px;height:17px;border:1px solid;border-color:#a8a49c #fff #fff #a8a49c"></div>
<div class="a" style="left:146px;top:425px;width:746px;height:17px;border:1px solid;border-color:#a8a49c #fff #fff #a8a49c"></div>
<div class="st" style="left:14px">Filename:</div>
<div class="st" style="left:147px">CH A</div>
<div class="st" style="left:174px">dBSPL</div>
<div class="st" style="left:210px">1/48 Octave</div>
<div class="st" style="left:266px">1/6 Octave</div>
<div class="st" style="left:317px">96kHz</div>
<div class="st" style="left:348px">Stepped</div>
<div class="st" style="left:392px">DelayCHB [ms] 0.000</div>
<div class="st" style="left:483px">Distortion Rise [dB] 30.00</div>
<div class="st" style="left:601px">SweepTime [ms] 7313.06</div>
<svg class="a" style="left:883px;top:434px" width="9" height="9" viewBox="0 0 9 9"><path d="M8 1L1 8M8 4L4 8M8 7L7 8" stroke="#808080" stroke-width="1"/><path d="M8.8 1.8L1.8 8.8M8.8 4.8L4.8 8.8" stroke="#fff" stroke-width="0.8"/></svg>
<div class="a" style="left:6px;top:445px;width:894px;height:1px;background:#fff"></div>
<div class="a" style="left:6px;top:467px;width:894px;height:1px;background:#fcfaf4"></div>
<div class="a" style="left:6px;top:468px;width:894px;height:2px;background:linear-gradient(#5a5650,#102040)"></div>
<div class="sep" style="left:98px;top:448px;height:18px"></div>
<div class="sep" style="left:145px;top:448px;height:18px"></div>
<div class="sep" style="left:233px;top:448px;height:18px"></div>
<div class="sep" style="left:278px;top:448px;height:18px"></div>
<div class="sep" style="left:304px;top:448px;height:18px"></div>
<div class="sep" style="left:327px;top:448px;height:18px"></div>
<div class="sep" style="left:519px;top:448px;height:18px"></div>
<div class="sep" style="left:563px;top:448px;height:18px"></div>
<div class="sep" style="left:627px;top:448px;height:18px"></div>
<div style="position:absolute;font-size:7.6px;font-weight:bold;color:#101010;line-height:9px;white-space:pre;left:10px;top:448px">Input A</div>
<div style="position:absolute;font-size:7.6px;font-weight:bold;color:#101010;line-height:9px;white-space:pre;left:10px;top:457px">-5</div>
<div style="position:absolute;font-size:7.6px;font-weight:bold;color:#101010;line-height:9px;white-space:pre;left:60px;top:457px">.   .   .</div>
<div style="position:absolute;font-size:7.6px;font-weight:bold;color:#101010;line-height:9px;white-space:pre;left:146px;top:448px">Input B</div>
<div style="position:absolute;font-size:7.6px;font-weight:bold;color:#101010;line-height:9px;white-space:pre;left:183px;top:448px">dBfs</div>
<div style="position:absolute;font-size:7.6px;font-weight:bold;color:#101010;line-height:9px;white-space:pre;left:146px;top:457px">-5</div>
<div style="position:absolute;font-size:7.6px;font-weight:bold;color:#101010;line-height:9px;white-space:pre;left:200px;top:458px">.0</div>
<div style="position:absolute;font-size:9.6px;font-weight:bold;color:#101010;line-height:11px;white-space:pre;left:86px;top:452px">0 dBV</div>
<div style="position:absolute;font-size:9.6px;font-weight:bold;color:#101010;line-height:11px;white-space:pre;left:221px;top:452px">0 dBV</div>
<div style="position:absolute;font-size:9.6px;font-weight:bold;color:#101010;line-height:11px;white-space:pre;left:374px;top:452px">Out 283.000 mV</div>
<div style="position:absolute;font-size:9.6px;font-weight:bold;color:#101010;line-height:11px;white-space:pre;left:613px;top:452px">96kHz</div>
<svg class="a" style="left:126px;top:451px" width="11" height="8" viewBox="0 0 11 8"><path d="M0 6.5h4c1 0 .5-5 1.5-5s.5 5 1.5 5h4" fill="none" stroke="#000" stroke-width="1.1"/></svg>
<svg class="a" style="left:261px;top:451px" width="11" height="8" viewBox="0 0 11 8"><path d="M0 6.5h4c1 0 .5-5 1.5-5s.5 5 1.5 5h4" fill="none" stroke="#000" stroke-width="1.1"/></svg>
<div style="position:absolute;left:285px;top:452px;font-size:8px;font-weight:bold;color:#101010;line-height:9px;letter-spacing:-0.3px">A-B</div>
<svg class="a" style="left:311px;top:451px" width="11" height="12" viewBox="0 0 11 12"><path d="M1 7.5c1.5-2 2.5-1 3.5 0s2 1 5-3" fill="none" stroke="#000" stroke-width="1.3"/><path d="M6 0.5l2 2h-4zM5 11.5l2-2h-4z" fill="#1830a0"/></svg>
<svg class="a" style="left:333px;top:451px" width="14" height="10" viewBox="0 0 14 10"><path d="M6 2.2A3 3 0 1 0 6 7.8" fill="none" stroke="#000" stroke-width="1.1"/><path d="M3 1l3 1.2-2 2z" fill="#000"/><text x="6.5" y="8.5" font-family="Liberation Sans" font-size="7.5" fill="#101010">A</text></svg>
<svg class="a" style="left:354px;top:451px" width="14" height="10" viewBox="0 0 14 10"><path d="M6 2.2A3 3 0 1 0 6 7.8" fill="none" stroke="#000" stroke-width="1.1"/><path d="M3 1l3 1.2-2 2z" fill="#000"/><text x="6.5" y="8.5" font-family="Liberation Sans" font-size="7.5" fill="#101010">B</text></svg>
<svg class="a" style="left:454px;top:455px" width="8" height="5" viewBox="0 0 8 5"><path d="M0 0h7.5L3.75 4z" fill="#000"/></svg>
<svg class="a" style="left:474px;top:455px" width="8" height="5" viewBox="0 0 8 5"><path d="M0 4h7.5L3.75 0z" fill="#000"/></svg>
<svg class="a" style="left:492px;top:452px" width="9" height="10" viewBox="0 0 9 10"><path d="M0.5 3h2.5L7 0v10L3 7H0.5z" fill="#000"/></svg>
<svg class="a" style="left:511px;top:456px" width="4" height="3" viewBox="0 0 4 3"><path d="M0 0h4L2 3z" fill="#000"/></svg>
<svg class="a" style="left:525px;top:451px" width="13" height="11" viewBox="0 0 13 11"><path d="M1.5 5l4-3.5" stroke="#e01010" stroke-width="1.6"/><path d="M3 5v2M1.5 10l1.5-3 1.5 3" fill="none" stroke="#202020" stroke-width="0.9"/><text x="5.5" y="8.5" font-family="Liberation Sans" font-weight="bold" font-size="7.5" fill="#202020">A</text></svg>
<svg class="a" style="left:545px;top:451px" width="13" height="11" viewBox="0 0 13 11"><path d="M1.5 5l4-3.5" stroke="#e01010" stroke-width="1.6"/><path d="M3 5v2M1.5 10l1.5-3 1.5 3" fill="none" stroke="#202020" stroke-width="0.9"/><text x="5.5" y="8.5" font-family="Liberation Sans" font-weight="bold" font-size="7.5" fill="#202020">B</text></svg>
<svg class="a" style="left:569px;top:453px" width="13" height="8" viewBox="0 0 13 8"><path d="M2 0.5h10l.5 1-1.5 6H1L.5 6.5z" fill="#202020"/><rect x="2.5" y="2.5" width="8" height="3" fill="#e8e0d0"/><rect x="3.5" y="3" width="6" height="2" fill="#e02020"/></svg>
<svg class="a" style="left:591px;top:452px" width="11" height="10" viewBox="0 0 11 10"><rect x="0.5" y="0.5" width="10" height="9" rx="2.5" fill="#202020"/><rect x="2" y="2" width="7" height="2" fill="#f0e8c8"/><rect x="1.5" y="5" width="8" height="3" fill="#f0e8c8"/></svg>
<div class="a" style="left:0;top:470px;width:900px;height:7px;background:linear-gradient(#2a70d0,#3a7ac0 50%,#1a5cb0)"></div>
<div class="a" style="left:0;top:477px;width:900px;height:29px;background:#e6e3dc;border-top:2px solid #fff"></div>
<div class="a" style="left:1px;top:479px;width:32px;height:25px;border:1px solid;border-color:#fff #404040 #404040 #fff;box-shadow:inset -1px -1px #a0a0a0"></div>
<svg class="a" style="left:4px;top:486px" width="11" height="10" viewBox="0 0 11 10"><path d="M0.5 2l4.5-1v4H0.5z" fill="#f04020"/><path d="M5.5 1l5-1v5h-5z" fill="#40b020"/><path d="M0.5 5.5H5v4l-4.5-1z" fill="#2080f0"/><path d="M5.5 5.5h5V10l-5-.8z" fill="#f8c010"/></svg>
<svg class="a" style="left:16px;top:486px" width="14" height="10" viewBox="0 0 14 10"><path d="M1 2h5M3.5 1v8M1 5h5M2 9l3-3M8 1l-1 4h5M9 5v4h3M8 2l3 1" fill="none" stroke="#000" stroke-width="1"/></svg>
<svg class="a" style="left:43px;top:484px" width="22" height="20" viewBox="0 0 22 20"><circle cx="10.5" cy="10" r="8.5" fill="#f8f6ee" stroke="#d0b890" stroke-width="0.8"/><path d="M4.5 10.5h12a6 6 0 1 0-1.5 4" fill="none" stroke="#2a90e8" stroke-width="2.8"/></svg>
<svg class="a" style="left:78px;top:482px" width="22" height="22" viewBox="0 0 22 22"><ellipse cx="11" cy="11" rx="10" ry="5" fill="none" stroke="#f0c020" stroke-width="1.5" transform="rotate(-30 11 11)"/><circle cx="11" cy="12" r="6.5" fill="#1c70d8"/><circle cx="11" cy="12" r="3" fill="#fff"/><path d="M5 12h12" stroke="#fff" stroke-width="1.5"/></svg>
<div class="a" style="left:105px;top:479px;width:31px;height:27px;background:#fff;border:1px solid;border-color:#404040 #fff #fff #404040"></div>
<svg class="a" style="left:109px;top:480px" width="22" height="22" viewBox="0 0 22 22"><path d="M17.5 7A7.5 7.5 0 1 0 17.5 15" fill="none" stroke="#508090" stroke-width="3.6" transform="translate(1 1)"/><path d="M17.5 7A7.5 7.5 0 1 0 17.5 15" fill="none" stroke="#e81818" stroke-width="3.6"/></svg>
<div style="position:absolute;left:655px;top:486px;font-family:Liberation Mono;font-size:8px;font-weight:bold;color:#101010;line-height:10px">CH</div>
<div class="sep" style="left:667px;top:482px;height:20px"></div>
<svg class="a" style="left:672px;top:485px" width="11" height="11" viewBox="0 0 11 11"><circle cx="5.5" cy="5.5" r="5" fill="#1840b0" stroke="#000" stroke-width="0.6"/><text x="3" y="8.5" font-family="Liberation Sans" font-weight="bold" font-size="8" fill="#fff">?</text></svg>
<svg class="a" style="left:689px;top:483px" width="7" height="13" viewBox="0 0 7 13"><path d="M1 3c1-2 4-2 5 0M1 5c1 1 4 1 5-1" fill="none" stroke="#202020" stroke-width="1.2"/><path d="M1.5 9h4l-2 2.5z" fill="#000"/></svg>
<svg class="a" style="left:703px;top:485px" width="10" height="12" viewBox="0 0 10 12"><rect x="0.5" y="3" width="9" height="8.5" rx="1.5" fill="#40a0f0" stroke="#2060a0" stroke-width="0.6"/><rect x="2.5" y="0.5" width="5" height="3" fill="#c0c0c0"/></svg>
<div class="a" style="left:715px;top:479px;width:185px;height:27px;border:1px solid;border-color:#a8a49c #fff #fff #a8a49c"></div>
<svg class="a" style="left:721px;top:485px" width="11" height="11" viewBox="0 0 11 11"><path d="M1 6l4-4 5 4-5 4z" fill="#303030"/><circle cx="5" cy="6" r="2.5" fill="#f0c040"/><rect x="6" y="7" width="4" height="3" fill="#2070e0"/></svg>
<svg class="a" style="left:735px;top:484px" width="12" height="13" viewBox="0 0 12 13"><path d="M6 0.5l5 2v4c0 3-2.5 5-5 6-2.5-1-5-3-5-6v-4z" fill="#1a7ff0"/><path d="M3 5l3 2.5 3-2.5M3 7.5l3 2.5 3-2.5" fill="none" stroke="#fff" stroke-width="1"/></svg>
<svg class="a" style="left:751px;top:485px" width="11" height="10" viewBox="0 0 11 10"><path d="M1 9h1.5v-1.5H1zM3.5 9h1.5V6H3.5zM6 9h1.5V4H6zM8.5 9H10V2H8.5z" fill="#f06010"/></svg>
<svg class="a" style="left:768px;top:484px" width="9" height="13" viewBox="0 0 9 13"><ellipse cx="4.5" cy="6.5" rx="4.2" ry="6" fill="#1a2a60"/><path d="M2.5 4l4 4-2 2V3l2 2-4 4" fill="none" stroke="#fff" stroke-width="0.9"/></svg>
<svg class="a" style="left:783px;top:484px" width="11" height="13" viewBox="0 0 11 13"><rect x="1.5" y="1.5" width="7" height="10" rx="1" fill="#e0e0e0" stroke="#606060" stroke-width="0.8"/><rect x="4" y="4" width="6" height="6" fill="#fff" stroke="#606060" stroke-width="0.8"/></svg>
<svg class="a" style="left:798px;top:484px" width="13" height="13" viewBox="0 0 13 13"><rect x="2" y="1" width="5" height="7" fill="#c0c0c0" stroke="#505050" stroke-width="0.6"/><circle cx="8.5" cy="9" r="3.5" fill="#20a020"/><path d="M6.8 9l1.3 1.3 2.2-2.5" fill="none" stroke="#fff" stroke-width="0.9"/></svg>
<svg class="a" style="left:815px;top:484px" width="11" height="12" viewBox="0 0 11 12"><path d="M1 4h2l3-3v10L3 8H1z" fill="#d8d8d8" stroke="#909090" stroke-width="0.6"/><path d="M8 3c1.5 1.5 1.5 4.5 0 6" fill="none" stroke="#a0a0a0" stroke-width="0.8"/></svg>
<svg class="a" style="left:829px;top:484px" width="14" height="12" viewBox="0 0 14 12"><path d="M1 11h12V1z" fill="none" stroke="#808080" stroke-width="0.8"/><path d="M4 11V8M7 11V6M10 11V3.5" stroke="#808080" stroke-width="0.8"/></svg>
<div style="position:absolute;left:856px;top:483.5px;font-family:Liberation Mono;font-size:8.5px;color:#101010;line-height:9px;letter-spacing:-1.05px">14:10</div>
<div style="position:absolute;left:845.5px;top:493.5px;font-family:Liberation Mono;font-size:8.5px;color:#101010;line-height:9px;letter-spacing:-1.18px">2015/12/15</div>
<svg class="a" style="left:887px;top:489px" width="13" height="11" viewBox="0 0 13 11"><rect x="0.5" y="0.5" width="12" height="9" fill="#3070c8" stroke="#204080" stroke-width="0.6"/><rect x="1" y="6" width="11" height="3" fill="#60a0e0"/></svg>
<div style="position:absolute;left:1px;top:38px;font-size:9px;color:#fff;line-height:10px">A</div>
<div style="position:absolute;left:1px;top:443px;font-size:9px;color:#fff;line-height:10px">F</div>
<svg class="a" style="left:0;top:440px" width="210" height="66" viewBox="0 440 210 66"><path d="M14.8 463.6 C19 459,22 456.5,25.6 454.8 C30 451.5,34 449.8,38.9 448.7 C43 447.6,47 447,51.2 447.1 C55 447.3,59 448,62.6 449.7 C66 451.3,69 453,70.8 455.3 C72.5 457.5,73.5 459.5,73.7 462 L64.6 465.1 C63 462,61 459.8,58.4 458.4 C55.5 457,52.5 456.4,49.2 456.4 C45.5 456.4,42 457,38.9 457.9 C36 459,34 460,32.2 461.5 L50.2 473.3 L34.8 479 Z" fill="#2c6db8" stroke="#f0e0f8" stroke-width="0.5"/><path d="M73.9 463 C73.5 466,73 469,71.8 471.8 C70 475,68 478,65.6 481 C62.5 484,60 486,56.4 487.2 C52.5 489,48.5 490.5,44 491.3 C39.5 492,35 492,30.7 491.8 C26 491,22 490.5,18.4 489.2 C14.5 487.5,12 485.5,10.1 483.1 C8.5 480.5,8.6 478,9.1 475.9 C9.6 473.5,10.2 471.8,11.2 470.2 C11.5 472.5,12 475,13.2 476.9 C15 479.5,17 481.5,19.4 483.1 C23 485,27 486.5,30.7 487.2 C35 488,39.5 488,44 487.2 C48 486.4,52 484.5,55.4 482.1 C58.5 479.5,61 476.8,62.6 473.8 C64 471,65 468.5,65.6 465.6 Z" fill="#2c6db8" stroke="#f0e0f8" stroke-width="0.5"/><g transform="translate(0 468) skewX(-15) translate(0 -468)"><path transform="translate(81 455)" d="M13 0V4M2.5 8V4H23.5V8M5 11H21M14 11L4 18M8 14C14 15 16 20 12 25L8.5 24M12 17L3 23.5M13.5 18L23.5 25M19.5 14L24 11" fill="none" stroke="#f4ecf8" stroke-width="5.4" stroke-linecap="butt" stroke-linejoin="miter"/><path transform="translate(113 455)" d="M2.5 3.5H21.5V17.5H2.5ZM2.5 10.5H21.5M12 0V21C12 24 14 25 17 25H25V20.5" fill="none" stroke="#f4ecf8" stroke-width="5.4" stroke-linecap="butt" stroke-linejoin="miter"/><path transform="translate(144 455)" d="M2 2L5.5 5.5M1 10.5H5.5V22L8.5 20M17 1L9 10M17 1L26 9M11 12.5H24M13 12.5V22C13 24 14 25 17 25H26V21M13 19L24 15.5" fill="none" stroke="#f4ecf8" stroke-width="5.4" stroke-linecap="butt" stroke-linejoin="miter"/><path transform="translate(174 455)" d="M1 10.5H11M6 2V21.5M1 23.5L12 19.5M14 3.5H26M12 11H27M19 11L13.5 23H26M22.5 17L26 23.5" fill="none" stroke="#f4ecf8" stroke-width="5.4" stroke-linecap="butt" stroke-linejoin="miter"/><path transform="translate(81 455)" d="M13 0V4M2.5 8V4H23.5V8M5 11H21M14 11L4 18M8 14C14 15 16 20 12 25L8.5 24M12 17L3 23.5M13.5 18L23.5 25M19.5 14L24 11" fill="none" stroke="#2c6db8" stroke-width="4.4" stroke-linecap="butt" stroke-linejoin="miter"/><path transform="translate(113 455)" d="M2.5 3.5H21.5V17.5H2.5ZM2.5 10.5H21.5M12 0V21C12 24 14 25 17 25H25V20.5" fill="none" stroke="#2c6db8" stroke-width="4.4" stroke-linecap="butt" stroke-linejoin="miter"/><path transform="translate(144 455)" d="M2 2L5.5 5.5M1 10.5H5.5V22L8.5 20M17 1L9 10M17 1L26 9M11 12.5H24M13 12.5V22C13 24 14 25 17 25H26V21M13 19L24 15.5" fill="none" stroke="#2c6db8" stroke-width="4.4" stroke-linecap="butt" stroke-linejoin="miter"/><path transform="translate(174 455)" d="M1 10.5H11M6 2V21.5M1 23.5L12 19.5M14 3.5H26M12 11H27M19 11L13.5 23H26M22.5 17L26 23.5" fill="none" stroke="#2c6db8" stroke-width="4.4" stroke-linecap="butt" stroke-linejoin="miter"/></g><text transform="scale(1.45 1)" y="492.8" font-family="Liberation Sans" font-weight="bold" font-size="9.6" fill="#f4ecf8" stroke="#f4ecf8" stroke-width="1.6"><tspan x="57.24">J</tspan><tspan x="64.69">D</tspan><tspan x="74.14">B</tspan><tspan x="82.62">B</tspan><tspan x="91.03">S</tspan><tspan x="99.52">.</tspan><tspan x="103.45">C</tspan><tspan x="112.41">O</tspan><tspan x="122.41">M</tspan></text><text transform="scale(1.45 1)" y="492.8" font-family="Liberation Sans" font-weight="bold" font-size="9.6" fill="#2c6db8" stroke="#2c6db8" stroke-width="0.45"><tspan x="57.24">J</tspan><tspan x="64.69">D</tspan><tspan x="74.14">B</tspan><tspan x="82.62">B</tspan><tspan x="91.03">S</tspan><tspan x="99.52">.</tspan><tspan x="103.45">C</tspan><tspan x="112.41">O</tspan><tspan x="122.41">M</tspan></text></svg>
</body></html>
